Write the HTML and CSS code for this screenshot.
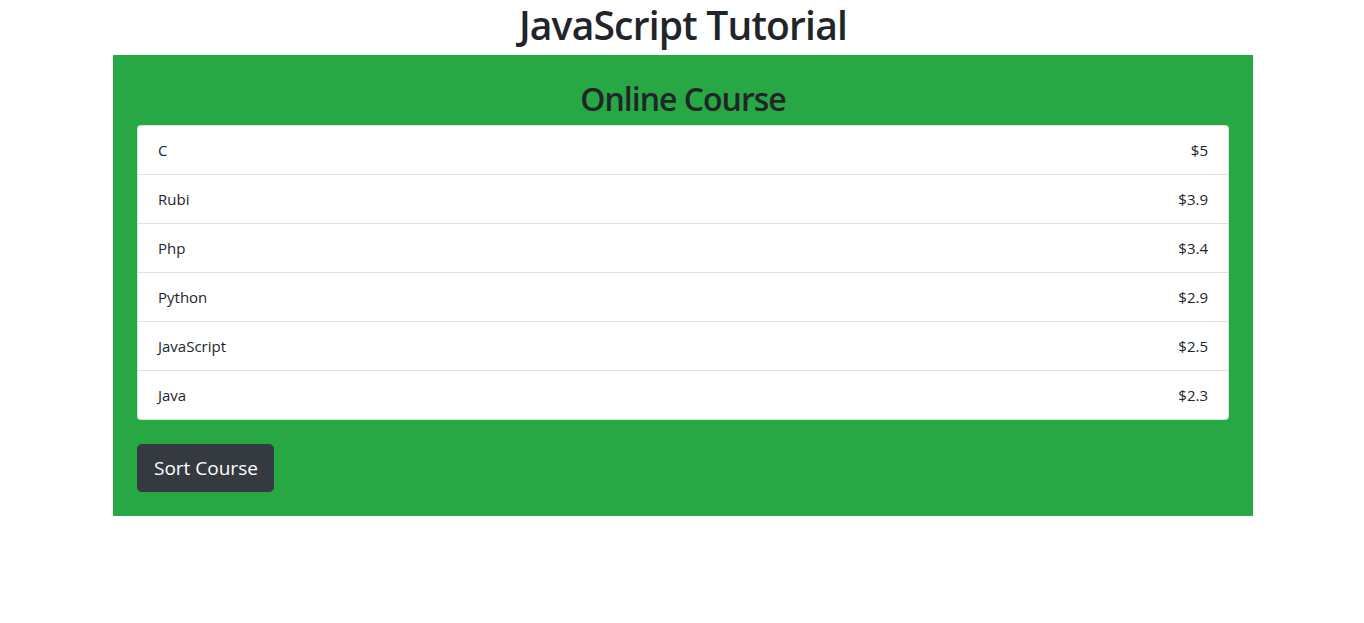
FILE: index.html
```html
<!DOCTYPE html>
<html lang="en">
<head>
<meta charset="utf-8">
<title>JavaScript Tutorial</title>
<link rel="stylesheet" href="styles.css">
</head>
<body>
<h1 class="page-title">JavaScript Tutorial</h1>
<div class="container">
  <section class="panel">
    <h2 class="panel-title">Online Course</h2>
    <ul class="list">
      <li class="item"><span>C</span><span>$5</span></li>
      <li class="item"><span>Rubi</span><span>$3.9</span></li>
      <li class="item"><span>Php</span><span>$3.4</span></li>
      <li class="item"><span>Python</span><span>$2.9</span></li>
      <li class="item"><span>JavaScript</span><span>$2.5</span></li>
      <li class="item"><span>Java</span><span>$2.3</span></li>
    </ul>
    <button class="btn" type="button">Sort Course</button>
  </section>
</div>
</body>
</html>
```
FILE: styles.css
```css
* { box-sizing: border-box; }
html, body { margin: 0; }
body {
  padding-left: 2px;
  font-family: "Open Sans", "Noto Sans", "Liberation Sans", sans-serif;
  font-size: 16px;
  line-height: 1.5;
  color: #212529;
  background: #fff;
}
.page-title {
  margin: 0 0 7px;
  padding-top: 1px;
  font-size: 39px;
  font-weight: 600;
  line-height: 47px;
  text-align: center;
  letter-spacing: -0.8px;
}
.container {
  width: 1140px;
  margin: 0 auto;
}
.panel {
  background: #28a745;
  padding: 24px;
}
.panel-title {
  margin: 0 0 8px;
  padding-top: 1px;
  font-size: 32px;
  font-weight: 600;
  line-height: 37px;
  text-align: center;
  letter-spacing: -1px;
}
.list {
  list-style: none;
  margin: 0;
  padding: 0;
  background: #fff;
  border: 1px solid rgba(0,0,0,.125);
  border-radius: 4px;
}
.item {
  display: flex;
  justify-content: space-between;
  padding: 12px 20px;
  font-size: 15px;
  line-height: 24px;
  border-top: 1px solid rgba(0,0,0,.125);
}
.item:first-child { border-top: 0; }
.btn {
  margin-top: 24px;
  font-family: inherit;
  font-size: 19px;
  line-height: 30px;
  padding: 8px 15.5px 8px 16px;
  color: #fff;
  background: #343a40;
  border: 1px solid #343a40;
  border-radius: 4.8px;
}
```
